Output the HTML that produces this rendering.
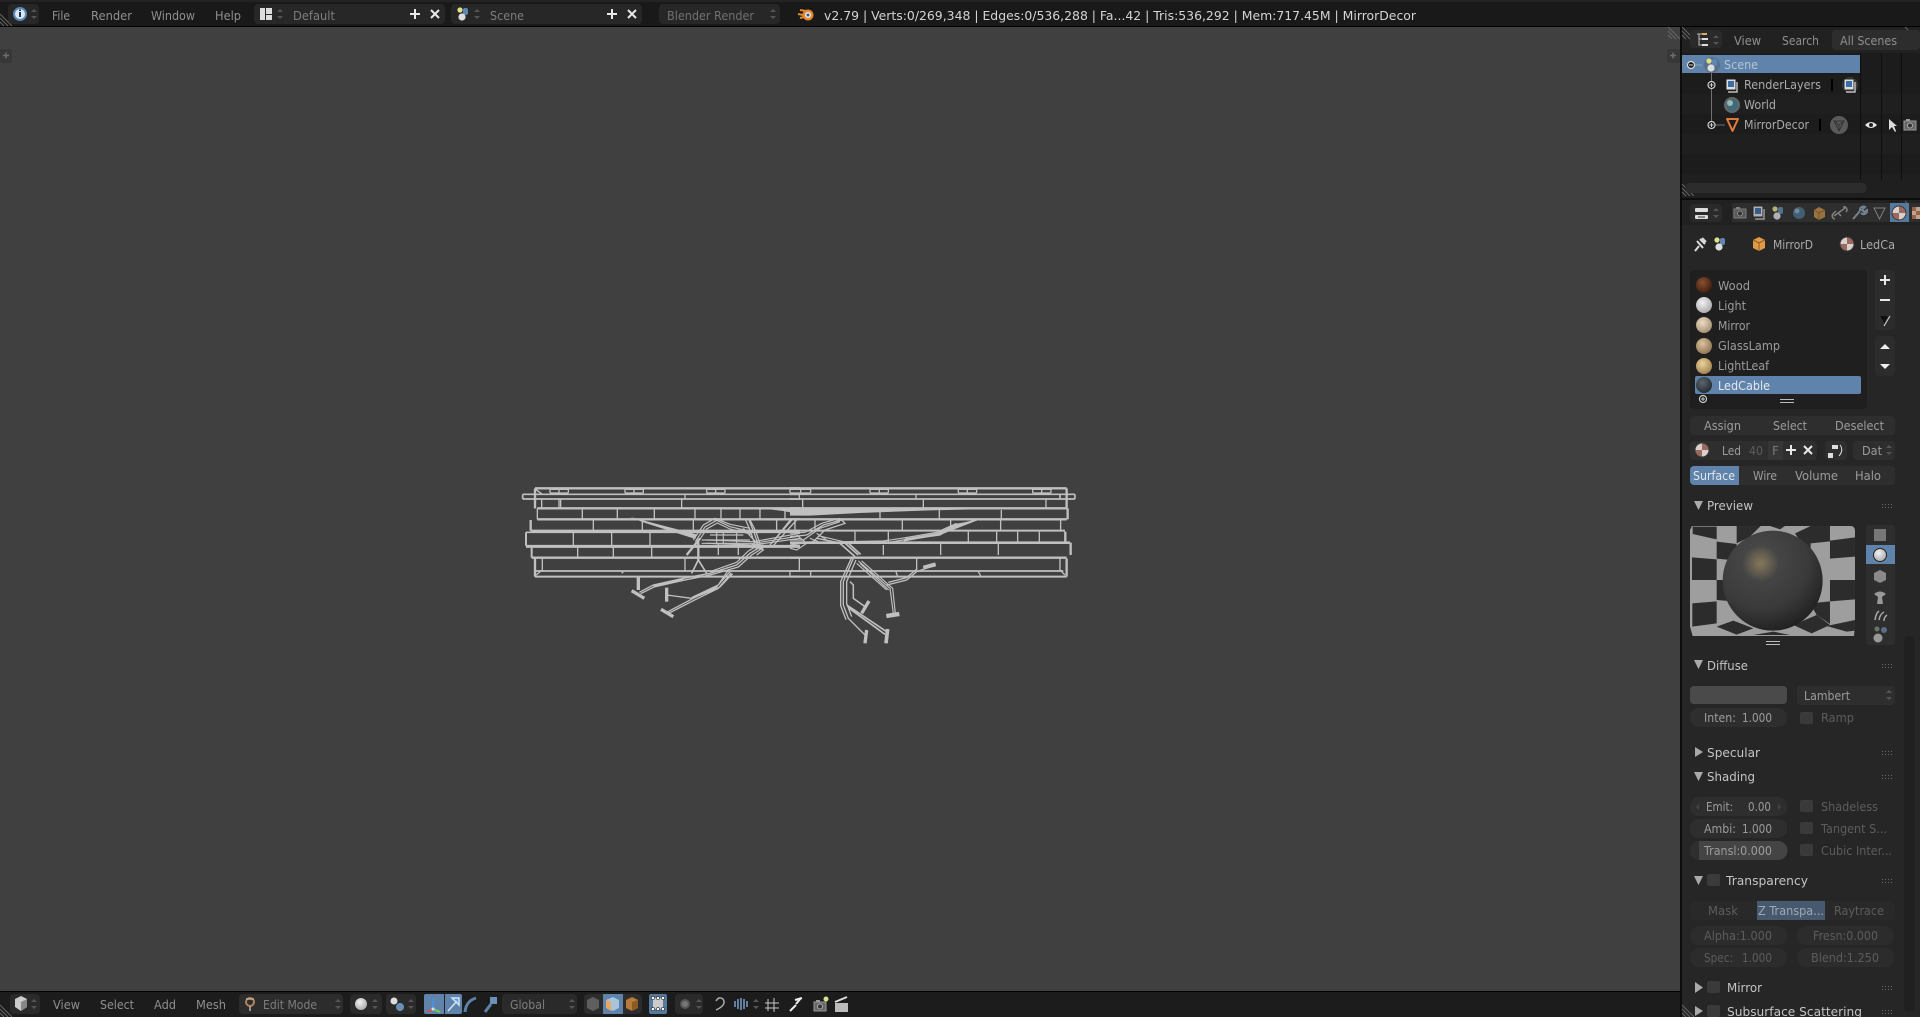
<!DOCTYPE html>
<html><head><meta charset="utf-8"><title>Blender</title>
<style>
html,body{margin:0;padding:0;background:#404040;overflow:hidden}
svg{display:block;position:absolute;left:0;top:0}
text{font-family:"DejaVu Sans","Liberation Sans",sans-serif;font-size:12px;fill:#9c9c9c}
.m{fill:#8f8f8f}.d{fill:#7d7d7d}.w{fill:#d4d4d4}.h{fill:#c4c4c4}.n{fill:#5c5c5c}.b{fill:#ededed}.o{fill:#aaa}
</style></head><body>
<svg width="1920" height="1017" viewBox="0 0 1920 1017" xmlns="http://www.w3.org/2000/svg">
<defs>
<g id="ar"><path d="M-3-2 0-5 3-2ZM-3 2 0 5 3 2Z" fill="#555"/></g>
<g id="dots" fill="#6a6a6a"><rect x="0" y="0" width="1" height="1"/><rect x="3" y="0" width="1" height="1"/><rect x="6" y="0" width="1" height="1"/><rect x="9" y="0" width="1" height="1"/><rect x="0" y="3" width="1" height="1"/><rect x="3" y="3" width="1" height="1"/><rect x="6" y="3" width="1" height="1"/><rect x="9" y="3" width="1" height="1"/></g>
<g id="plus"><path d="M-5 0H5M0-5V5" stroke="#e8e8e8" stroke-width="2" fill="none"/></g>
<g id="x"><path d="M-4-4 4 4M-4 4 4-4" stroke="#e8e8e8" stroke-width="2" fill="none"/></g>
<g id="hatch"><path d="M0 0 12 12M0 4 8 12M0 8 4 12" stroke="#666" stroke-width="1" fill="none"/></g>
<g id="pc"><circle r="3.5" fill="#161616" stroke="#ccc" stroke-width="1.2"/><path d="M-2 0H2M0-2V2" stroke="#ccc"/></g>
<radialGradient id="gW" cx=".4" cy=".35" r=".7"><stop offset="0" stop-color="#8a5030"/><stop offset="1" stop-color="#3a1c0e"/></radialGradient>
<radialGradient id="gL" cx=".4" cy=".35" r=".7"><stop offset="0" stop-color="#f2f2f2"/><stop offset="1" stop-color="#a8a8a8"/></radialGradient>
<radialGradient id="gM" cx=".4" cy=".35" r=".7"><stop offset="0" stop-color="#ecdcc4"/><stop offset="1" stop-color="#a08c70"/></radialGradient>
<radialGradient id="gG" cx=".4" cy=".35" r=".7"><stop offset="0" stop-color="#dcc39e"/><stop offset="1" stop-color="#8c7252"/></radialGradient>
<radialGradient id="gF" cx=".4" cy=".35" r=".7"><stop offset="0" stop-color="#ecd298"/><stop offset="1" stop-color="#9c8050"/></radialGradient>
<radialGradient id="gC" cx=".4" cy=".35" r=".7"><stop offset="0" stop-color="#5c6670"/><stop offset="1" stop-color="#22282e"/></radialGradient>
<radialGradient id="gS" cx=".38" cy=".3" r=".8"><stop offset="0" stop-color="#4c4c4c"/><stop offset=".6" stop-color="#3a3a3a"/><stop offset="1" stop-color="#1a1a1a"/></radialGradient>
<radialGradient id="gH"><stop offset="0" stop-color="#a48e60" stop-opacity=".65"/><stop offset="1" stop-color="#a48e60" stop-opacity="0"/></radialGradient>
<g id="mat"><circle r="7" fill="#d8d0cc"/><path d="M0-7A7 7 0 0 1 7 0H0Z" fill="#9c6a5c"/><path d="M-7 0A7 7 0 0 0 0 7V0Z" fill="#9c6a5c"/><circle r="7" fill="none" stroke="#3a3a3a"/></g>
<g id="cam"><rect x="-6" y="-4" width="12" height="9" fill="#666" stroke="#999"/><circle r="2.5" fill="#333" stroke="#aaa" cy=".5"/><rect x="-4" y="-6" width="4" height="2" fill="#999"/></g>
<g id="lay"><rect x="-5" y="-7" width="10" height="11" fill="#ddd" stroke="#222"/><rect x="-3" y="-5" width="6" height="6" fill="#3a6ea8"/><path d="M6-4V6H-3" fill="none" stroke="#bbb" stroke-width="1.5"/></g>
<g id="scn"><circle cx="-3" cy="-4" r="2.6" fill="#dfe08a"/><rect x="0" y="-6" width="5" height="7" rx="2" fill="#5d86b0"/><circle cx="-1" cy="3" r="3.6" fill="#ddd"/></g>
</defs>

<!-- base areas -->
<rect width="1920" height="1017" fill="#404040"/>
<rect x="0" y="0" width="1920" height="26" fill="#191919"/>
<rect x="0" y="0" width="1920" height="2" fill="#232323"/>
<rect x="0" y="26" width="1920" height="1" fill="#000"/>
<rect x="0" y="991" width="1680" height="1" fill="#000"/>
<rect x="0" y="992" width="1680" height="25" fill="#1c1c1c"/>
<rect x="1680" y="27" width="2" height="990" fill="#0c0c0c"/>
<rect x="1682" y="27" width="238" height="26" fill="#212121"/>
<rect x="1682" y="53" width="238" height="145" fill="#1c1c1c"/>
<rect x="1682" y="94" width="238" height="20" fill="#1f1f1f"/>
<rect x="1682" y="134" width="238" height="20" fill="#1f1f1f"/>
<rect x="1682" y="174" width="238" height="24" fill="#1f1f1f"/>
<rect x="1682" y="198" width="238" height="2" fill="#0c0c0c"/>
<rect x="1682" y="200" width="238" height="25" fill="#212121"/>
<rect x="1682" y="225" width="238" height="792" fill="#262626"/>

<!-- corner hatches / tabs -->
<use href="#hatch" x="0" y="14"/>
<use href="#hatch" x="1668" y="27"/>
<use href="#hatch" x="1682" y="27"/>
<use href="#hatch" x="1682" y="184"/>
<use href="#hatch" x="1905" y="27"/>
<use href="#hatch" x="1905" y="201"/>
<use href="#hatch" x="1682" y="1005"/>
<use href="#hatch" x="0" y="1005"/>
<rect x="0" y="49" width="12" height="14" rx="2" fill="#373737"/><path d="M3 55.500H9M6 52.500V58.500" stroke="#6c6c6c" stroke-width="1.500"/>
<rect x="1667" y="49" width="13" height="14" rx="2" fill="#373737"/><path d="M1670 55.500H1676M1673 52.500V58.500" stroke="#6c6c6c" stroke-width="1.500"/>

<!-- top bar -->
<rect x="8" y="4" width="31" height="20" rx="4" fill="#272727"/>
<circle cx="20" cy="14" r="6" fill="#dce8f4" stroke="#5a86b4" stroke-width="2"/><rect x="19" y="12" width="2" height="5" fill="#234"/><rect x="19" y="9.500" width="2" height="1.500" fill="#234"/>
<use href="#ar" x="34" y="14"/>
<text class="m" x="52" y="20" textLength="18" lengthAdjust="spacingAndGlyphs">File</text>
<text class="m" x="91" y="20" textLength="41" lengthAdjust="spacingAndGlyphs">Render</text>
<text class="m" x="151" y="20" textLength="44" lengthAdjust="spacingAndGlyphs">Window</text>
<text class="m" x="215" y="20" textLength="26" lengthAdjust="spacingAndGlyphs">Help</text>
<rect x="254" y="4" width="191" height="20" rx="4" fill="#272727"/>
<rect x="260" y="8" width="5" height="12" fill="#ddd"/><rect x="266" y="8" width="6" height="6" fill="#ddd"/><rect x="266" y="15" width="6" height="5" fill="#ddd"/>
<use href="#ar" x="280" y="14"/>
<text class="d" x="293" y="20" textLength="42" lengthAdjust="spacingAndGlyphs">Default</text>
<use href="#plus" x="415" y="14"/><use href="#x" x="435" y="14"/>
<rect x="451" y="4" width="191" height="20" rx="4" fill="#272727"/>
<use href="#scn" x="463" y="14"/>
<use href="#ar" x="477" y="14"/>
<text class="d" x="490" y="20" textLength="34" lengthAdjust="spacingAndGlyphs">Scene</text>
<use href="#plus" x="612" y="14"/><use href="#x" x="632" y="14"/>
<rect x="659" y="4" width="121" height="20" rx="4" fill="#272727"/>
<text style="fill:#707070" x="667" y="20" textLength="87" lengthAdjust="spacingAndGlyphs">Blender Render</text>
<use href="#ar" x="773" y="14"/>
<!-- blender logo -->
<path d="M800 10 806 11M798 14 803 15M800 18 804 17" stroke="#e08a30" stroke-width="2"/><circle cx="808" cy="15" r="5.500" fill="#e8862a"/><circle cx="808" cy="15" r="3" fill="#e8eef4"/><circle cx="808" cy="15" r="1.500" fill="#335a80"/>
<text class="w" x="824" y="20" textLength="592" lengthAdjust="spacingAndGlyphs">v2.79 | Verts:0/269,348 | Edges:0/536,288 | Fa...42 | Tris:536,292 | Mem:717.45M | MirrorDecor</text>

<!-- wireframe -->
<g transform="translate(510 475) scale(.3333)" fill="none" stroke="#c0c0c0" stroke-linecap="butt">
<path d="M75 40H870" stroke-width="7"/>
<path d="M38 58H870M38 72H870M38 58V72" stroke-width="5"/>
<path d="M75 40V100M75 250V305" stroke-width="7"/>
<path d="M120 43H175M120 54H175M120 43V54M147 43V54M175 43V54M345 43H400M345 54H400M345 43V54M372 43V54M400 43V54M590 43H645M590 54H645M590 43V54M617 43V54M645 43V54M840 43V54" stroke-width="4"/>
<path d="M82 100H870" stroke-width="7"/>
<path d="M82 100V133M95 72V100M147 72V100M152 72V100M515 72V100M525 58V72" stroke-width="4"/>
<path d="M82 133H870" stroke-width="7"/>
<path d="M62 135V167" stroke-width="7"/>
<path d="M62 167H870" stroke-width="6"/>
<path d="M48 172H870" stroke-width="5"/>
<path d="M48 172V212" stroke-width="6"/>
<path d="M48 214H870" stroke-width="9"/>
<path d="M65 218V248" stroke-width="6"/>
<path d="M65 248H870" stroke-width="7"/>
<path d="M75 288H870" stroke-width="5"/>
<path d="M75 305H870" stroke-width="6"/>
<path d="M97 250V285L78 300M78 44 95 56" stroke-width="4"/>
<path d="M217 100V133M322 100V133M433 100V133M555 100V133M633 100V133M690 100V133M750 100V133M825 100V133M250 135V167M397 135V167M550 135V167M800 135V167M855 135V167M190 172V212M305 172V212M420 172V212M203 218V248M310 218V248M425 218V248M625 205V240M685 205V240M525 250V288M840 290V302M335 295 340 290" stroke-width="4"/>
<!-- branches -->
<path d="M360 126 560 178 556 192 400 142Z" fill="#c0c0c0" stroke="none"/>
<path d="M530 240 570 190M565 200V258" stroke-width="7"/>
<path d="M545 295 565 255 590 295" stroke-width="5"/>
<path d="M550 195 580 150 615 130 660 148 720 160M556 200 585 156 620 136 660 155 725 170M562 205 590 162 622 144 660 162 725 178M575 195H720M575 205H725M620 170V205M600 180H700M640 172V205M680 165V205" stroke-width="3.500"/>
<path d="M705 130 722 170 740 225M715 130 732 172 750 225M725 205 760 225 740 240M700 160 750 215M720 135 738 170 755 222" stroke-width="4"/>
<path d="M590 205 730 210 870 190M590 195 730 200 870 175M730 205 870 183" stroke-width="3.500"/>
<path d="M385 305V345" stroke-width="10"/>
<path d="M365 347 403 370" stroke-width="10"/>
<path d="M388 352 430 330 520 310 600 295 680 270 720 235 760 210" stroke-width="4"/>
<path d="M392 356 432 336 520 316 600 300 685 276 725 240 760 218" stroke-width="4"/>
<path d="M430 333 520 313" stroke-width="7"/>
<path d="M600 290 680 262 715 228 755 205" stroke-width="3.500"/>
<path d="M470 338V380" stroke-width="10"/>
<path d="M453 403 490 425" stroke-width="10"/>
<path d="M470 360 545 370M470 412 550 370 620 335 660 290M474 416 552 376 625 340 664 294M545 368 625 330 655 285M560 365 630 336 668 296" stroke-width="4"/>
<path d="M780 210 850 130M790 212 860 135M785 205 845 130" stroke-width="4"/>
<path d="M750 100 870 102 870 118 820 108Z" fill="#c0c0c0" stroke="none"/>
</g>
<g transform="translate(790 475) scale(.3333)" fill="none" stroke="#c0c0c0">
<path d="M0 40H830" stroke-width="7"/>
<path d="M0 58H855M0 72H855M855 58V72M810 58V72" stroke-width="5"/>
<path d="M0 100H830" stroke-width="7"/>
<path d="M0 133H830" stroke-width="7"/>
<path d="M0 167H825" stroke-width="6"/>
<path d="M0 203H840" stroke-width="8"/>
<path d="M0 248H830" stroke-width="7"/>
<path d="M0 288H820" stroke-width="5"/>
<path d="M0 305H830" stroke-width="6"/>
<path d="M830 40V100M833 100V133M826 170V200M842 203V240M830 250V305" stroke-width="7"/>
<path d="M812 135V165M810 250V285L825 300" stroke-width="4"/>
<path d="M0 43H62M0 54H62M32 43V54M62 43V54M240 43H295M240 54H295M240 43V54M268 43V54M295 43V54M505 43H560M505 54H560M505 43V54M532 43V54M560 43V54M728 43H783M728 54H783M728 43V54M755 43V54M783 43V54" stroke-width="4"/>
<path d="M28 60V72M38 72V100M378 60V72M400 72V100M768 72V100M270 105V133M448 105V133M634 105V133M75 135V167M337 135V167M482 135V167M632 135V167M195 170V200M295 170V200M535 170V200M620 170V200M683 170V200M748 170V200M280 210V240M452 205V240M625 205V240M28 250V285M380 250V285M62 290V302M318 290 322 302M565 290 572 302" stroke-width="4"/>
<!-- top band -->
<path d="M0 100 700 100 420 106 210 114 60 122 0 122Z" fill="#c0c0c0" stroke="none"/>
<path d="M0 185 50 180 100 150 155 135 165 145 105 165 70 200 0 210" stroke-width="4"/>
<path d="M0 195 40 195 90 160 150 140M80 175 110 195M60 190 85 200M20 180 50 205 20 225 0 220M0 175 45 172 95 145 150 130" stroke-width="3.500"/>
<path d="M80 190 155 205 280 205 340 195 450 180 500 150 560 135" stroke-width="4"/>
<path d="M85 182 160 200 280 198 335 190 440 172 500 145" stroke-width="3.500"/>
<path d="M340 200 450 180 565 135 500 146 440 174 345 190Z" fill="#c0c0c0" stroke="none"/>
<path d="M150 205 195 245M160 200 205 240M170 200 212 238" stroke-width="5"/>
<path d="M190 250 160 320 160 390 175 430 225 480M198 255 170 320 170 385 185 425M184 250 152 320 152 392 168 434" stroke-width="4"/>
<path d="M170 390 290 470M175 398 285 478" stroke-width="5"/>
<path d="M180 320 190 330 190 370 225 395" stroke-width="4.500"/>
<path d="M205 258 300 340 310 415M215 258 308 340 316 415M200 265 290 345M210 265 296 345" stroke-width="3.500"/>
<path d="M290 330 350 315 380 290 435 270M295 322 350 308 378 284" stroke-width="4"/>
<path d="M400 278 437 268" stroke-width="12"/>
<path d="M237 378 215 415" stroke-width="10"/>
<path d="M230 465 225 505" stroke-width="10"/>
<path d="M293 462 288 505" stroke-width="11"/>
<path d="M289 423 328 417" stroke-width="13"/>
</g>

<!-- outliner header -->
<rect x="1690" y="30" width="32" height="18" rx="4" fill="#2a2a2a"/>
<path d="M1697 34H1702M1699 34V45H1702M1699 39H1702" stroke="#bbb" fill="none"/><rect x="1702" y="33" width="5" height="2" fill="#d8b060"/><rect x="1702" y="38" width="6" height="2" fill="#ddd"/><rect x="1702" y="44" width="6" height="2" fill="#ddd"/>
<use href="#ar" x="1716" y="40"/>
<text class="m" x="1734" y="45" textLength="27" lengthAdjust="spacingAndGlyphs">View</text>
<text class="m" x="1782" y="45" textLength="37" lengthAdjust="spacingAndGlyphs">Search</text>
<rect x="1832" y="30" width="88" height="20" rx="4" fill="#2d2d2d"/>
<text class="m" x="1840" y="45" textLength="57" lengthAdjust="spacingAndGlyphs">All Scenes</text>

<!-- outliner -->
<rect x="1682" y="55" width="178" height="18" fill="#5f83aa"/>
<path d="M1860.500 53V180M1881.500 53V180M1901.500 53V180" stroke="#0e0e0e"/>
<g transform="translate(0 1)">
<path d="M1711.500 70V124M1711.500 124H1725" stroke="#707070"/>
<circle cx="1691" cy="64" r="3.500" fill="#161616" stroke="#ddd" stroke-width="1.200"/><path d="M1689 64H1693" stroke="#ddd"/>
<path d="M1695 64H1702" stroke="#8aa"/>
<circle cx="1712" cy="64" r="8" fill="#58708a"/>
<use href="#scn" x="1712" y="64"/>
<text x="1724" y="68" style="fill:#b4c4d4" textLength="34" lengthAdjust="spacingAndGlyphs">Scene</text>
<use href="#pc" x="1711.500" y="84"/>
<use href="#lay" x="1731" y="85"/>
<text class="o" x="1744" y="88" textLength="77" lengthAdjust="spacingAndGlyphs">RenderLayers</text>
<rect x="1831" y="78" width="2" height="12" fill="#000"/>
<circle cx="1850" cy="84" r="8" fill="#3a3a3a"/><use href="#lay" x="1849" y="85"/>
<circle cx="1732" cy="104" r="8" fill="#666"/><circle cx="1732" cy="104" r="6" fill="#3f6a7c"/><circle cx="1730" cy="102" r="3" fill="#9ab8b4"/>
<text class="o" x="1744" y="108" textLength="32" lengthAdjust="spacingAndGlyphs">World</text>
<use href="#pc" x="1711.500" y="124"/>
<path d="M1727 118H1738L1732.500 130Z" fill="#1c1c1c" stroke="#e07a3a" stroke-width="2" stroke-linejoin="round"/>
<text class="o" x="1744" y="128" textLength="65" lengthAdjust="spacingAndGlyphs">MirrorDecor</text>
<rect x="1819" y="118" width="2" height="12" fill="#000"/>
<circle cx="1839" cy="124" r="9" fill="#5a5a5a"/><path d="M1834 120H1844L1839 130ZM1834 120 1839 124 1844 120M1839 124V130" fill="none" stroke="#333"/>
<path d="M1865 124Q1871 118 1877 124 1871 130 1865 124Z" fill="#e6e6e6"/><circle cx="1871" cy="124" r="2" fill="#222"/>
<path d="M1889 118V129L1892 126 1895 131 1896 130 1894 125H1897Z" fill="#ddd"/>
<use href="#cam" x="1910" y="124"/>
</g>
<rect x="1685" y="183" width="182" height="10" rx="5" fill="#2c2c2c"/>

<!-- props header -->
<rect x="1690" y="204" width="32" height="18" rx="4" fill="#2a2a2a"/>
<rect x="1695" y="208" width="13" height="4" rx="1" fill="#ddd"/><rect x="1695" y="215" width="13" height="4" rx="1" fill="#ddd"/><path d="M1698 217H1705" stroke="#333"/>
<use href="#ar" x="1716" y="213"/>
<rect x="1732" y="203" width="188" height="19" fill="#2e2e2e"/>
<rect x="1890" y="203" width="19" height="19" fill="#56799e"/>
<g transform="translate(0 213)" opacity=".75">
<use href="#cam" x="1740" y="0"/><use href="#lay" x="1758" y="0"/>
<use href="#scn" x="1778" y="0"/>
<circle cx="1799" r="6" fill="#46708c"/><circle cx="1797" cy="-2" r="2.500" fill="#88a8b4"/>
<path d="M1814-3 1819-6 1825-3V4L1819 7 1814 4Z" fill="#c08a48"/><path d="M1814-3 1819 0 1825-3M1819 0V7" stroke="#8c6028" fill="none"/>
<path d="M1835 6A3 3 0 0 1 1833 1L1836-2M1838 0 1841 3M1843-6A3 3 0 0 1 1846-1M1834 3 1845-5" stroke="#9c9c9c" stroke-width="1.500" fill="none"/>
<path d="M1853 6 1860-2M1860-2A3.500 3.500 0 0 1 1865-6L1862-3 1864-1 1867-3A3.500 3.500 0 0 1 1861 0" stroke="#8ca0b4" stroke-width="2" fill="none"/>
<path d="M1874-5H1885L1879.500 6Z" fill="none" stroke="#9a9a9a"/>
</g>
<use href="#mat" x="1899" y="213"/>
<g fill="#9c6048"><rect x="1912" y="207" width="4" height="4"/><rect x="1916" y="211" width="4" height="4"/><rect x="1912" y="215" width="4" height="4"/></g>
<g fill="#b8a890"><rect x="1916" y="207" width="4" height="4"/><rect x="1912" y="211" width="4" height="4"/><rect x="1916" y="215" width="4" height="4"/></g>

<!-- context -->
<g transform="translate(0 1)">
<path d="M1695 250 1699 245M1697 240 1703 247M1700 238 1705 243M1702 237 1706 241" stroke="#ddd" stroke-width="2" fill="none"/>
<use href="#scn" x="1720" y="243"/>
<path d="M1753 239 1759 236 1765 239V247L1759 250 1753 247Z" fill="#e09a48"/><path d="M1753 239 1759 242 1765 239M1759 242V250" stroke="#8c5c20" fill="none"/>
<text class="o" x="1773" y="248" textLength="40" lengthAdjust="spacingAndGlyphs">MirrorD</text>
<use href="#mat" x="1847" y="243"/>
<text class="o" x="1860" y="248" textLength="35" lengthAdjust="spacingAndGlyphs">LedCa</text>
</g>

<!-- material list -->
<rect x="1690" y="270" width="177" height="139" rx="3" fill="#1f1f1f"/>
<rect x="1695" y="376" width="166" height="18" rx="2" fill="#5f83aa"/>
<circle cx="1704" cy="285" r="8" fill="url(#gW)"/><circle cx="1704" cy="305" r="8" fill="url(#gL)"/><circle cx="1704" cy="325" r="8" fill="url(#gM)"/><circle cx="1704" cy="346" r="8" fill="url(#gG)"/><circle cx="1704" cy="366" r="8" fill="url(#gF)"/><circle cx="1704" cy="385" r="8" fill="url(#gC)"/>
<text x="1718" y="290" textLength="32" lengthAdjust="spacingAndGlyphs">Wood</text>
<text x="1718" y="310" textLength="28" lengthAdjust="spacingAndGlyphs">Light</text>
<text x="1718" y="330" textLength="32" lengthAdjust="spacingAndGlyphs">Mirror</text>
<text x="1718" y="350" textLength="62" lengthAdjust="spacingAndGlyphs">GlassLamp</text>
<text x="1718" y="370" textLength="51" lengthAdjust="spacingAndGlyphs">LightLeaf</text>
<text class="w" x="1718" y="390" style="fill:#e4e8ee" textLength="52" lengthAdjust="spacingAndGlyphs">LedCable</text>
<use href="#pc" x="1703" y="399"/>
<path d="M1780 399.500H1794M1780 402.500H1794" stroke="#bbb"/>
<rect x="1875" y="270" width="20" height="60" rx="4" fill="#2c2c2c"/>
<rect x="1875" y="336" width="20" height="40" rx="4" fill="#2c2c2c"/>
<use href="#plus" x="1885" y="280"/><path d="M1880 300H1890" stroke="#e8e8e8" stroke-width="2"/>
<path d="M1880 316H1888L1885 321V324Z" fill="#0e0e0e"/><path d="M1884 326 1890 316" stroke="#ddd"/>
<path d="M1880 349 1885 344 1890 349Z" fill="#eee"/><path d="M1880 364 1885 369 1890 364Z" fill="#eee"/>

<!-- assign -->
<rect x="1690" y="416" width="205" height="19" rx="4" fill="#2e2e2e"/>
<text x="1704" y="430" textLength="37" lengthAdjust="spacingAndGlyphs">Assign</text>
<text x="1773" y="430" textLength="34" lengthAdjust="spacingAndGlyphs">Select</text>
<text x="1835" y="430" textLength="49" lengthAdjust="spacingAndGlyphs">Deselect</text>
<rect x="1690" y="441" width="127" height="19" rx="4" fill="#2e2e2e"/>
<use href="#mat" x="1702" y="450"/>
<text x="1722" y="455" textLength="19" lengthAdjust="spacingAndGlyphs">Led</text>
<text class="n" x="1749" y="455" textLength="14" lengthAdjust="spacingAndGlyphs">40</text>
<rect x="1768" y="441" width="15" height="19" fill="#363636"/>
<text style="fill:#777" x="1772" y="455">F</text>
<use href="#plus" x="1791" y="450"/><use href="#x" x="1808" y="450"/>
<rect x="1825" y="441" width="22" height="19" rx="4" fill="#2e2e2e"/>
<path d="M1832 445H1838V449H1832ZM1828 453H1833V458H1828Z" fill="#ddd"/><path d="M1840 445Q1844 450 1839 456" stroke="#ddd" fill="none"/>
<rect x="1853" y="441" width="42" height="19" rx="4" fill="#2e2e2e"/>
<text x="1862" y="455" textLength="20" lengthAdjust="spacingAndGlyphs">Dat</text>
<use href="#ar" x="1889" y="450"/>
<rect x="1690" y="466" width="205" height="19" rx="4" fill="#2e2e2e"/>
<path d="M1690 470a4 4 0 0 1 4-4h45v19h-45a4 4 0 0 1-4-4Z" fill="#5f83aa"/>
<text x="1693" y="480" style="fill:#e4e8ee" textLength="42" lengthAdjust="spacingAndGlyphs">Surface</text>
<text x="1753" y="480" textLength="24" lengthAdjust="spacingAndGlyphs">Wire</text>
<text x="1795" y="480" textLength="43" lengthAdjust="spacingAndGlyphs">Volume</text>
<text x="1855" y="480" textLength="26" lengthAdjust="spacingAndGlyphs">Halo</text>

<!-- panel headers -->
<g fill="#aaa">
<path d="M1694 501H1703L1698.500 510Z"/><path d="M1694 660H1703L1698.500 669Z"/>
<path d="M1695 747V757L1703 752Z"/><path d="M1694 772H1703L1698.500 781Z"/>
<path d="M1694 876H1703L1698.500 885Z"/><path d="M1695 982V993L1703 987.500Z"/><path d="M1695 1006V1016L1703 1011Z"/>
</g>
<text class="h" x="1707" y="510" textLength="46" lengthAdjust="spacingAndGlyphs">Preview</text>
<text class="h" x="1707" y="670" textLength="41" lengthAdjust="spacingAndGlyphs">Diffuse</text>
<text class="h" x="1707" y="757" textLength="53" lengthAdjust="spacingAndGlyphs">Specular</text>
<text class="h" x="1707" y="781" textLength="48" lengthAdjust="spacingAndGlyphs">Shading</text>
<text class="h" x="1726" y="885" textLength="82" lengthAdjust="spacingAndGlyphs">Transparency</text>
<text class="h" x="1727" y="992" textLength="35" lengthAdjust="spacingAndGlyphs">Mirror</text>
<text class="h" x="1727" y="1016" textLength="135" lengthAdjust="spacingAndGlyphs">Subsurface Scattering</text>
<use href="#dots" x="1882" y="504"/><use href="#dots" x="1882" y="664"/><use href="#dots" x="1882" y="751"/><use href="#dots" x="1882" y="775"/><use href="#dots" x="1882" y="879"/><use href="#dots" x="1882" y="986"/><use href="#dots" x="1882" y="1010"/>

<!-- right scrollbar -->
<rect x="1904" y="636" width="11" height="376" rx="5" fill="#202020"/>

<!-- preview -->
<g transform="translate(1670 500) scale(.3333)">
<path d="M65 80Q60 78 78 78H540Q555 78 555 92V378L552 408H68L60 380V90Z" fill="#9e9e9e"/>
<g fill="#2c2c2c">
<path d="M68 80H140V118L68 102Z"/><path d="M200 78H272L240 110 200 130Z"/><path d="M300 78H345L330 88Z"/><path d="M375 100 422 78H480V124L422 130V170Z"/>
<path d="M140 125 200 132V182L140 176Z"/><path d="M480 122 555 112V170L480 176Z"/>
<path d="M66 172 140 178V240H66Z"/><path d="M140 240H200V305L140 300Z"/>
<path d="M66 310 140 304V370L66 380Z"/><path d="M480 240H555V298L480 304Z"/>
<path d="M420 310 480 304V372L440 345Z"/>
<path d="M190 362 250 385 200 404 140 380Z"/><path d="M370 375 440 345 480 375 425 400Z"/><path d="M250 405 310 395 360 405Z"/><path d="M470 378 555 360V392L530 395Z"/>
</g>
<rect x="60" y="240" width="7" height="140" fill="#9e9e9e"/>
<circle cx="308" cy="242" r="150" fill="url(#gS)"/>
<circle cx="272" cy="190" r="55" fill="url(#gH)"/>
</g>
<path d="M1766 641.500H1780M1766 644.500H1780" stroke="#bbb"/>
<rect x="1866" y="525" width="29" height="120" rx="4" fill="#2e2e2e"/>
<rect x="1866" y="545" width="29" height="19" fill="#5f83aa"/>
<rect x="1874" y="529" width="12" height="12" fill="#777"/>
<circle cx="1880" cy="555" r="6.500" fill="url(#gL)" stroke="#222"/>
<path d="M1874 573 1880 570 1886 573V580L1880 583 1874 580Z" fill="#8a8a8a"/>
<path d="M1874 594Q1880 589 1886 594L1882 597 1883 604H1877L1878 597Z" fill="#999"/>
<path d="M1875 620Q1876 613 1879 611M1879 620Q1880 614 1884 612M1884 621Q1884 617 1887 615" stroke="#aaa" stroke-width="1.500" fill="none"/>
<circle cx="1877" cy="629" r="2.500" fill="#8a8" opacity=".6"/><circle cx="1884" cy="630" r="3" fill="#58708a"/><circle cx="1878" cy="638" r="4.500" fill="#999"/>

<!-- diffuse -->
<rect x="1690" y="686" width="97" height="18" rx="4" fill="#4a4a4a"/>
<rect x="1797" y="686" width="98" height="19" rx="4" fill="#2e2e2e"/>
<text x="1804" y="700" textLength="46" lengthAdjust="spacingAndGlyphs">Lambert</text>
<use href="#ar" x="1889" y="695"/>
<rect x="1690" y="708" width="97" height="19" rx="9" fill="#2e2e2e"/>
<text x="1704" y="722" textLength="32" lengthAdjust="spacingAndGlyphs">Inten:</text><text x="1742" y="722" textLength="30" lengthAdjust="spacingAndGlyphs">1.000</text>
<rect x="1800" y="712" width="13" height="12" rx="2" fill="#3a3a3a"/>
<text class="n" x="1821" y="722" textLength="33" lengthAdjust="spacingAndGlyphs">Ramp</text>

<!-- shading -->
<rect x="1690" y="797" width="97" height="19" rx="9" fill="#2e2e2e"/>
<text x="1706" y="811" textLength="27" lengthAdjust="spacingAndGlyphs">Emit:</text><text x="1748" y="811" textLength="23" lengthAdjust="spacingAndGlyphs">0.00</text>
<path d="M1699 804 1696 807 1699 810ZM1778 804 1781 807 1778 810Z" fill="#444"/>
<rect x="1690" y="819" width="97" height="19" rx="9" fill="#2e2e2e"/>
<text x="1704" y="833" textLength="32" lengthAdjust="spacingAndGlyphs">Ambi:</text><text x="1742" y="833" textLength="30" lengthAdjust="spacingAndGlyphs">1.000</text>
<rect x="1690" y="841" width="97" height="19" rx="9" fill="#2e2e2e"/>
<path d="M1699 841H1778a9.500 9.500 0 0 1 0 19H1699Z" fill="#444"/>
<text x="1704" y="855" textLength="68" lengthAdjust="spacingAndGlyphs">Transl:0.000</text>
<rect x="1800" y="800" width="13" height="12" rx="2" fill="#3a3a3a"/><rect x="1800" y="822" width="13" height="12" rx="2" fill="#3a3a3a"/><rect x="1800" y="844" width="13" height="12" rx="2" fill="#3a3a3a"/>
<text class="n" x="1821" y="811" textLength="57" lengthAdjust="spacingAndGlyphs">Shadeless</text>
<text class="n" x="1821" y="833" textLength="66" lengthAdjust="spacingAndGlyphs">Tangent S...</text>
<text class="n" x="1821" y="855" textLength="71" lengthAdjust="spacingAndGlyphs">Cubic Inter...</text>

<!-- transparency -->
<rect x="1707" y="874" width="13" height="12" rx="2" fill="#3a3a3a"/>
<rect x="1690" y="901" width="205" height="19" rx="4" fill="#292929"/>
<rect x="1757" y="901" width="68" height="19" fill="#46596f"/>
<text class="n" x="1708" y="915" textLength="30" lengthAdjust="spacingAndGlyphs">Mask</text>
<text x="1758" y="915" style="fill:#a0a8b0" textLength="66" lengthAdjust="spacingAndGlyphs">Z Transpa...</text>
<text class="n" x="1834" y="915" textLength="50" lengthAdjust="spacingAndGlyphs">Raytrace</text>
<rect x="1690" y="926" width="97" height="19" rx="9" fill="#2c2c2c"/>
<rect x="1797" y="926" width="97" height="19" rx="9" fill="#2c2c2c"/>
<rect x="1690" y="948" width="97" height="19" rx="9" fill="#2c2c2c"/>
<rect x="1797" y="948" width="97" height="19" rx="9" fill="#2c2c2c"/>
<text class="n" x="1704" y="940" textLength="68" lengthAdjust="spacingAndGlyphs">Alpha:1.000</text>
<text class="n" x="1813" y="940" textLength="65" lengthAdjust="spacingAndGlyphs">Fresn:0.000</text>
<text class="n" x="1704" y="962" textLength="29" lengthAdjust="spacingAndGlyphs">Spec:</text><text class="n" x="1742" y="962" textLength="30" lengthAdjust="spacingAndGlyphs">1.000</text>
<text class="n" x="1811" y="962" textLength="68" lengthAdjust="spacingAndGlyphs">Blend:1.250</text>
<rect x="1707" y="981" width="13" height="12" rx="2" fill="#3a3a3a"/>
<rect x="1707" y="1005" width="13" height="12" rx="2" fill="#3a3a3a"/>

<!-- bottom header -->
<rect x="10" y="994" width="30" height="20" rx="4" fill="#2a2a2a"/>
<path d="M15 999 21 996 27 999V1007L21 1011 15 1007Z" fill="#ccc"/><path d="M21 1002V1011L27 1007V999Z" fill="#888"/>
<use href="#ar" x="34" y="1004"/>
<text class="m" x="53" y="1009" textLength="27" lengthAdjust="spacingAndGlyphs">View</text>
<text class="m" x="100" y="1009" textLength="34" lengthAdjust="spacingAndGlyphs">Select</text>
<text class="m" x="154" y="1009" textLength="22" lengthAdjust="spacingAndGlyphs">Add</text>
<text class="m" x="196" y="1009" textLength="30" lengthAdjust="spacingAndGlyphs">Mesh</text>
<rect x="239" y="994" width="104" height="20" rx="4" fill="#2c2c2c"/>
<circle cx="250" cy="1002" r="4" fill="none" stroke="#b08060" stroke-width="2"/><path d="M246 999H254M250 1006V1011" stroke="#c0b090" stroke-width="1.500"/>
<text class="d" x="263" y="1009" textLength="54" lengthAdjust="spacingAndGlyphs">Edit Mode</text>
<use href="#ar" x="338" y="1004"/>
<rect x="350" y="994" width="32" height="20" rx="4" fill="#2a2a2a"/><circle cx="361" cy="1004" r="6" fill="url(#gL)"/><use href="#ar" x="375" y="1004"/>
<rect x="386" y="994" width="30" height="20" rx="4" fill="#2a2a2a"/><circle cx="394" cy="1001" r="3.500" fill="#ddd"/><circle cx="400" cy="1007" r="4" fill="#6a90b8"/><use href="#ar" x="411" y="1004"/>
<rect x="424" y="994" width="38" height="20" rx="2" fill="#5f83aa"/><path d="M444.500 994V1014" stroke="#222"/>
<path d="M433 999V1009" stroke="#4a90e0" stroke-width="2"/><path d="M433 1009 427 1012" stroke="#e05050" stroke-width="2"/><path d="M433 1009 440 1012" stroke="#70d050" stroke-width="2"/><circle cx="433" cy="1009" r="1.500" fill="#ddd"/>
<path d="M448 1011 457 1001M452 998H459V1005Z" fill="#5c9ae0" stroke="#cfe4f8" stroke-width="1.500"/>
<path d="M465 1012Q466 1001 476 998" stroke="#5c80a8" stroke-width="3" fill="none"/>
<path d="M485 1012 491 1004" stroke="#5c80a8" stroke-width="3"/><rect x="490" y="997" width="7" height="7" fill="#6c90b8"/>
<rect x="502" y="994" width="75" height="20" rx="4" fill="#2a2a2a"/>
<text class="d" x="510" y="1009" textLength="35" lengthAdjust="spacingAndGlyphs">Global</text>
<use href="#ar" x="572" y="1004"/>
<rect x="584" y="994" width="58" height="20" rx="4" fill="#2c2c2c"/>
<rect x="603" y="994" width="20" height="20" fill="#5f83aa"/>
<path d="M587 1000 593 997 599 1000V1008L593 1011 587 1008Z" fill="#5e5e5e"/>
<path d="M606 1000 613 997 619 1000V1008L613 1011 606 1008Z" fill="#a8c4dc"/><path d="M606 1000 611 1002V1011L606 1008Z" fill="#e8a860"/>
<path d="M626 1000 632 997 638 1000V1008L632 1011 626 1008Z" fill="#b87a38"/><path d="M632 1002V1011L638 1008V1000Z" fill="#8c5a24"/>
<rect x="649" y="994" width="18" height="20" rx="2" fill="#56799e"/><rect x="653" y="998" width="10" height="11" fill="#ccc"/><g fill="#fff" stroke="#222" stroke-width=".6"><circle cx="653" cy="998" r="1.600"/><circle cx="663" cy="998" r="1.600"/><circle cx="653" cy="1009" r="1.600"/><circle cx="663" cy="1009" r="1.600"/><circle cx="658" cy="998" r="1.600"/><circle cx="658" cy="1009" r="1.600"/></g>
<rect x="675" y="994" width="28" height="20" rx="4" fill="#2a2a2a"/><circle cx="685" cy="1004" r="4" fill="#777" stroke="#555" stroke-width="2"/><use href="#ar" x="699" y="1004"/>
<path d="M716 1010Q727 1005 723 999 719 996 716 1001" stroke="#aaa" stroke-width="1.500" fill="none"/>
<path d="M741 998V1010M735 1001V1007M738 999V1009M744 999V1009M747 1001V1007" stroke="#7aa0d0" stroke-width="1.500"/><use href="#ar" x="756" y="1004"/>
<path d="M768 999V1011M765 1003H779M765 1008H779M774 998V1012" stroke="#c8c8c8"/>
<path d="M790 1011 796 1005M795 1000 802 998M801 998 796 1004" stroke="#eee" stroke-width="2" fill="none"/>
<use href="#cam" x="820" y="1006"/><circle cx="826" cy="999" r="2.500" fill="#dfe08a"/>
<rect x="835" y="1003" width="13" height="9" fill="#bbb"/><path d="M835 1002 847 997" stroke="#ddd" stroke-width="2"/>
</svg>
</body></html>
